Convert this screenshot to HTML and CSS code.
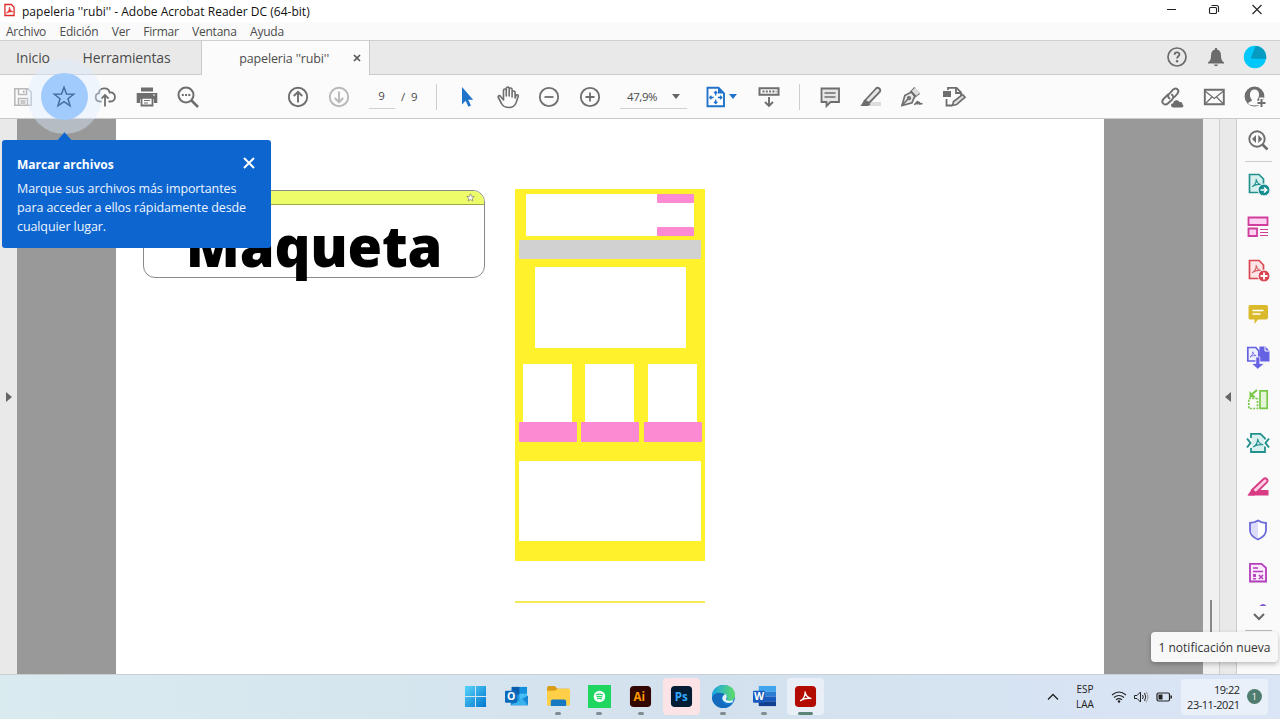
FILE: index.html
```html
<!DOCTYPE html>
<html lang="es">
<head>
<meta charset="utf-8">
<title>papeleria "rubi" - Adobe Acrobat Reader DC</title>
<link rel="stylesheet" href="styles.css">
</head>
<body>
<svg width="0" height="0" class="defs">
  <symbol id="trefoil" viewBox="0 0 24 24"><path d="M3 19.500C8 17.500 12 10 11.300 4C12.500 10 16 14 21.500 15.500C16 14.500 9 15.500 3 19.500Z" fill="none" stroke="currentColor" stroke-width="2.400" stroke-linejoin="round"/></symbol>
</svg>
<div class="app">
  <header class="titlebar">
    <svg class="app-icon" viewBox="0 0 12 14"><path d="M1 1h7l3 3v9H1z" fill="#fff" stroke="#d92b2b" stroke-width="1.400"/><path d="M2.500 10.500C5 9 6 6.500 5.800 4C6.500 7 8 8.500 10 9C7.500 8.500 5 9 2.500 10.500z" fill="#e33" stroke="#e33" stroke-width=".8"/></svg>
    <span class="title">papeleria ''rubi'' - Adobe Acrobat Reader DC (64-bit)</span>
    <svg class="window-controls" width="102" height="20" viewBox="0 0 102 20" fill="none" stroke="#222" stroke-width="1.100"><path d="M3 9.500h9M88.500 5l9 9M97.500 5l-9 9"/><rect x="45.500" y="7.500" width="7" height="6" rx="1"/><path d="M47.500 5.500h5a2 2 0 0 1 2 2v4.500"/></svg>
  </header>
  <nav class="menubar"><span>Archivo</span><span>Edición</span><span>Ver</span><span>Firmar</span><span>Ventana</span><span>Ayuda</span></nav>
  <div class="tabs">
    <span class="tab home">Inicio</span><span class="tab tools">Herramientas</span>
    <div class="tab-open"><span>papeleria ''rubi''</span><svg width="8" height="8" viewBox="0 0 8 8"><path d="M1 1l6 6M7 1L1 7" stroke="#555" stroke-width="1.700"/></svg></div>
    <div class="account">
      <svg width="24" height="24" viewBox="0 0 24 24"><circle cx="12" cy="12" r="9" fill="none" stroke="#6b6b6b" stroke-width="1.700"/><path d="M9.600 9.700c0-3.200 5-3 4.800-.2c-.1 1.700-2.300 1.900-2.300 4" fill="none" stroke="#666" stroke-width="1.800"/><circle cx="12.100" cy="16.300" r="1.200" fill="#666"/></svg>
      <svg width="24" height="24" viewBox="0 0 24 24" fill="#6b6b6b"><path d="M11 4.500V3h2v1.500c3 .7 4 3 4 6.500c0 3.500 1 5 3 6.500v1H4v-1c2-1.500 3-3 3-6.500c0-3.500 1-5.800 4-6.500z"/><path d="M10 19.500h4c-.3 2.200-3.700 2.200-4 0z"/></svg>
      <svg width="24" height="24" viewBox="0 0 24 24"><circle cx="12" cy="12" r="11.200" fill="#00c8fb"/><path d="M12.500 1a11.200 11.200 0 0 1 10.600 13L7.800 13.500z" fill="#069bc0"/></svg>
    </div>
  </div>
  <div class="toolbar">
    <div class="tool-group files">
      <svg viewBox="0 0 24 24" fill="none" stroke="#b9b9b9" stroke-width="1.600"><path d="M3.800 3.800h13l3.400 3.400v13H3.800zM7.500 4v5.500h8V4M7.500 20v-6.500h9V20M12.700 5.500v2.500M9.500 16h5M9.500 18h5"/></svg>
      <span class="star-tool"><svg viewBox="0 0 24 24"><path d="M12 2.300l2.500 6.800 7.200.2-5.700 4.400 2 7.100-6-4.100-6 4.100 2-7.100-5.700-4.400 7.200-.2z" fill="none" stroke="#436e9f" stroke-width="1.500"/></svg></span>
      <svg viewBox="0 0 24 24" fill="none" stroke="#6e6e6e" stroke-width="1.800"><path d="M8.500 16.500H6.800A4.200 4.200 0 0 1 6 8.200C6.200 2.100 15.500 1.800 16.700 7.500C23.300 6.500 23.800 16.500 17.500 16.500h-2M12 21.500V10.500M8.400 13.700L12 10l3.600 3.700"/></svg>
      <svg viewBox="0 0 24 24"><path d="M6 2.500h12v4H6z" fill="#6e6e6e"/><path d="M1.700 8h20.600v10H19v-4H5v4H1.700z" fill="#6e6e6e"/><path d="M6.500 12.800h11v7.700h-11z" fill="#fbfbfb" stroke="#6e6e6e" stroke-width="1.800"/><path d="M9 15.500h6M9 18h4" stroke="#6e6e6e" stroke-width="1.200"/><path d="M18 10h2" stroke="#fff"/></svg>
      <svg viewBox="0 0 24 24" fill="none" stroke="#6e6e6e"><circle cx="10" cy="10" r="7.500" stroke-width="2"/><path d="M15.500 15.500l6.500 6.500" stroke-width="2.500"/><path d="M5.800 10h8.500" stroke-width="2" stroke-dasharray="2 1.250"/></svg>
    </div>
    <div class="tool-group pages">
      <svg viewBox="0 0 24 24" fill="none" stroke="#6e6e6e" stroke-width="1.900"><circle cx="12" cy="12" r="9.200"/><path d="M12 17.500V7.500M7.800 11L12 6.800l4.200 4.200"/></svg>
      <svg viewBox="0 0 24 24" fill="none" stroke="#b8b8b8" stroke-width="1.900"><circle cx="12" cy="12" r="9.200"/><path d="M12 6.500v10M7.800 13l4.200 4.200 4.200-4.200"/></svg>
      <span class="page-input">9</span><span class="page-total">/&nbsp; 9</span>
    </div>
    <i class="divider"></i>
    <div class="tool-group view">
      <svg viewBox="0 0 24 24"><path d="M7 2v17.500l3.600-3.800 2.800 6 2.600-1.200-2.800-5.800h5z" fill="#2173ca"/></svg>
      <svg viewBox="0 0 24 24" fill="none" stroke="#6e6e6e" stroke-width="1.600" stroke-linecap="round" stroke-linejoin="round"><path d="M7.500 12V5.500c0-2 2.800-2 2.800 0V11V3.500c0-2 2.900-2 2.900 0V11V4.500c0-2 2.900-2 2.900 0V12V7.500c0-2 3-1.800 3 0V13l1-2.500c.8-1.500 2.800-.6 2 1.300L20 18c-1.500 3.500-3.500 4.500-7 4.500c-4 0-6-1-7.500-4L2.300 12.500c-.6-1.700 1.300-2.500 2.300-1L7.500 15z"/></svg>
      <svg viewBox="0 0 24 24" fill="none" stroke="#6e6e6e" stroke-width="1.800"><circle cx="12" cy="12" r="9.200"/><path d="M7.500 12h9"/></svg>
      <svg viewBox="0 0 24 24" fill="none" stroke="#6e6e6e" stroke-width="1.800"><circle cx="12" cy="12" r="9.200"/><path d="M7.500 12h9M12 7.500v9"/></svg>
      <span class="zoom-box">47,9%<b class="caret"></b></span>
      <svg viewBox="0 0 24 24"><path d="M3.500 2.800h11l5.500 5.500v12.900H3.500z" fill="#fff" stroke="#2173ca" stroke-width="1.900"/><path d="M14 2v6.500h6.500z" fill="#2173ca"/><path d="M11.700 6.500v4M11.700 14.500v4M5.700 12.500h4M13.800 12.500h4M10 8.200L11.700 6.500l1.700 1.700M10 16.800l1.700 1.700 1.700-1.700M7.400 10.800L5.700 12.500l1.700 1.700M16.100 10.800l1.700 1.700-1.700 1.700" fill="none" stroke="#2173ca" stroke-width="1.300"/></svg>
      <b class="caret blue"></b>
      <svg class="scroll-tool" viewBox="0 0 24 24" fill="none" stroke="#6e6e6e"><path d="M2.500 3.300h19v6.500h-19z" stroke-width="2"/><path d="M5.500 6.600h14" stroke-width="2" stroke-dasharray="2 1.300"/><path d="M12 12v8.500M8 17l4 4 4-4" stroke-width="1.900"/></svg>
    </div>
    <i class="divider"></i>
    <div class="tool-group markup">
      <svg viewBox="0 0 24 24" fill="#e6e6e6" stroke="#6e6e6e" stroke-width="1.800"><path d="M3.500 3.500h17.500v13.500h-8.500l-4 4v-4h-5z"/><path d="M6.500 8h11M6.500 12h11" stroke-width="1.400"/></svg>
      <svg viewBox="0 0 24 24"><path d="M9 17h13v4H5z" fill="#ddd"/><path d="M6 15.500L17 3.500c2-2 5.500.8 3.700 3.500L10 18z" fill="#e5e5e5" stroke="#6e6e6e" stroke-width="1.800"/><path d="M5.500 14.500l6 5-2.500 1.500H1.500z" fill="#6e6e6e"/></svg>
      <svg viewBox="0 0 24 24" fill="none" stroke="#6e6e6e" stroke-width="1.700"><path d="M11.500 7L4.800 10.500 2 20.500l10-2.800 2.800-6.500z" fill="#e9e9e9"/><path d="M2 20.500l6-6.500"/><circle cx="9" cy="13.200" r="1.300"/><path d="M11 6.800L14.800 2.500M14.800 11.500l4.700-3.300"/><path d="M11.500 6l4-3.500 4.500 5-4 3.500z" fill="#ddd" stroke="none"/><path d="M10.500 5.800l5.500 6" stroke-width="1.900"/><path d="M14.500 20c3.500-5 4-4 2.500-.5c1.500-3 2.800-3 2.200 0c1-1.500 2-.8 3.300-.5" stroke-width="1.600"/></svg>
      <svg viewBox="0 0 24 24" fill="none" stroke="#6e6e6e" stroke-width="1.800"><path d="M6 5V2.800h8.500l4.500 4.500V11M14 3v5h5M4.500 14v6.500H10"/><path d="M1 6h8v6H1z" fill="#6e6e6e" stroke="none"/><path d="M10.500 20.500l1-4 9-7 2.500 2.700-8.500 7.300z" fill="#ddd" stroke-width="1.600"/></svg>
    </div>
    <div class="tool-group share">
      <svg viewBox="0 0 24 24" fill="none" stroke="#6e6e6e" stroke-width="1.900" stroke-linecap="round"><path d="M9.500 13.500c-2-1.500-1.500-3.500-.3-4.700L13 4.700c3.200-3 7 .6 4.400 3.900L14.500 12M8 9.500L3.500 14c-3.200 3.500 1.300 7.200 4.300 4.500L12 14.700c1.500-1.500 1.700-3.500 0-5"/><path d="M13.500 22.500c-3.200 0-3.400-4-.3-4.200c0-3.800 5.300-4 6.200-1.300c2.700-.5 3.400 1.200 2.800 2.300c2 .7 1.300 3.200-.5 3.200z" fill="#6e6e6e" stroke="none"/></svg>
      <svg viewBox="0 0 24 24" fill="none" stroke="#6e6e6e"><path d="M2.800 4.800h19v14.500h-19z" stroke-width="1.900"/><path d="M3 6l9.300 7.500L21.500 6M3 19l7-7M21.500 19l-7-7" stroke-width="1.200"/></svg>
      <svg viewBox="0 0 24 24"><circle cx="11.500" cy="11.500" r="9.900" fill="#6e6e6e"/><path d="M5 18.300c1.200-1.600 4-1.800 4-3.300C5.500 11 6.500 4.500 11.500 4.500s6 6.500 2.500 10.500c0 1.200 2 1.500 3.500 2.500l-3 2.600C11 21 7 20.500 5 18.300z" fill="#fbfbfb"/><path d="M18.500 12.500v11M13 18h11" stroke="#fbfbfb" stroke-width="4.500"/><path d="M18.500 14v8M14.500 18h8" stroke="#6e6e6e" stroke-width="2"/></svg>
    </div>
  </div>
  <main class="workspace">
    <div class="left-rail"><svg width="6" height="10" viewBox="0 0 6 10"><path d="M0 0l6 5-6 5z" fill="#666"/></svg></div>
    <div class="canvas">
      <section class="page">
        <div class="heading-card"><div class="card-strip"><svg width="9" height="9" viewBox="0 0 24 24"><path d="M12 2l3 7 7 .5-5.500 4.700 2 7.300-6.500-4-6.500 4 2-7.300L2 9.500 9 9z" fill="#fff" stroke="#9b9b80" stroke-width="2.500"/></svg></div><h1>Maqueta</h1></div>
        <div class="mockups">
          <div class="mock">
            <div class="mock-header"><i></i><i></i></div>
            <div class="mock-nav"></div>
            <div class="mock-hero"></div>
            <div class="mock-cards"><div><i></i><b></b></div><div><i></i><b></b></div><div><i></i><b></b></div></div>
            <div class="mock-footer"></div>
          </div>
          <div class="mock-line"></div>
        </div>
      </section>
    </div>
    <div class="scrollbar"><i></i></div>
    <div class="right-rail"><svg width="6" height="10" viewBox="0 0 6 10"><path d="M6 0L0 5l6 5z" fill="#666"/></svg></div>
    <aside class="tools-panel">
      <div class="first"><svg viewBox="0 0 24 24" fill="none" stroke="#6e6e6e"><circle cx="11" cy="11" r="7.700" stroke-width="1.900"/><path d="M16.500 16.500l5 5" stroke-width="2.700"/><path d="M10 7v8l-4-4zM12.300 7v8l4-4z" fill="#6e6e6e" stroke="none"/></svg></div>
      <div><svg viewBox="0 0 24 24"><path d="M3.500 2.500h9.500l4.500 4.500v13.500h-14z" fill="#d6efef" stroke="#23928f" stroke-width="1.700"/><svg x="5" y="5" width="11" height="12" color="#23928f"><use href="#trefoil"/></svg><circle cx="18" cy="18" r="6" fill="#168e90" stroke="#fafafa"/><path d="M14.500 18h6M18 15.500l2.700 2.500-2.700 2.500" fill="none" stroke="#fff" stroke-width="1.600"/></svg></div>
      <div><svg viewBox="0 0 24 24" fill="#fbd2ef" stroke="#d13d9d" stroke-width="1.800"><path d="M2.500 2.500h19v7.500h-19zM2.500 13.500h8.500v7.500H2.500z"/><path d="M14 14.500h8M14 17.500h8M14 20.500h8" stroke-width="1.100"/></svg></div>
      <div><svg viewBox="0 0 24 24"><path d="M3.500 2.500h9.500l4.500 4.500v13.500h-14z" fill="#fde5e5" stroke="#da464f" stroke-width="1.700"/><svg x="5" y="5" width="11" height="12" color="#d66368"><use href="#trefoil"/></svg><circle cx="18" cy="18" r="6" fill="#d94650" stroke="#fafafa"/><path d="M14.500 18h7M18 14.500v7" stroke="#fff" stroke-width="1.800"/></svg></div>
      <div><svg viewBox="0 0 24 24"><path d="M4 3h16q2 0 2 2v10.500q0 2-2 2h-8L8.500 22v-4.500H4q-1.500 0-1.500-2V5Q2.500 3 4 3z" fill="#dab92b"/><path d="M6.500 8.500h11M6.500 12h8" stroke="#fff" stroke-width="1.600"/></svg></div>
      <div><svg viewBox="0 0 24 24"><path d="M1.800 2.500h8l3 3.500v10h-11z" fill="#eeefff" stroke="#6462e2" stroke-width="1.700"/><svg x="3" y="4.500" width="8" height="10" color="#6462e2"><use href="#trefoil"/></svg><path d="M13.500 1.500h6L23.500 6v10.500H13z" fill="#6462e2"/><path d="M19 1.500V6h4.500" fill="none" stroke="#fff"/><path d="M9.800 12h4v6.500h4.500L11.800 24.200 5.500 18.500h4.300z" fill="#6462e2" stroke="#fff" stroke-width=".7"/></svg></div>
      <div><svg viewBox="0 0 24 24" fill="none" stroke="#7ac648" stroke-width="1.700"><path d="M14 2.800h7.200v17.500H14z" fill="#e3f5d6"/><path d="M11.500 10.500h-8.700v10h8.700v-10" stroke-dasharray="2 1.300"/><path d="M11 2L5 7" stroke-width="2"/><path d="M3.500 3v6.500H10z" fill="#7ac648" stroke="none"/></svg></div>
      <div><svg viewBox="0 0 24 24" fill="none" stroke="#23918e" stroke-width="1.800"><path d="M5 7V2.800h9.500L19 7.300v13.700H5V17" fill="#d9f0ef"/><path d="M4 8.500h2v7H4zM18 8.500h2v7h-2z" fill="#fafafa" stroke="none"/><svg x="6" y="5.500" width="12" height="13" color="#23918e"><use href="#trefoil"/></svg><path d="M1 7.500L4.500 12 1 16.500M23 7.500L19.500 12l3.500 4.500" stroke-width="2"/></svg></div>
      <div><svg viewBox="0 0 24 24"><path d="M8 15h14.500v5.500H2z" fill="#d83a83"/><path d="M6 15L17.500 4c2-2 5.500.8 3.300 3.300L10 18z" fill="#ffcfe5" stroke="#d83a83" stroke-width="1.800"/><path d="M5.500 14.500l4.500 4-1.500 2H1.500z" fill="#d83a83"/></svg></div>
      <div><svg viewBox="0 0 24 24"><path d="M12 2.500c2.500 1.800 5 2.500 8 2.500v7c0 4-3.500 7.500-8 9.500c-4.500-2-8-5.500-8-9.500V5c3 0 5.500-.7 8-2.500z" fill="#fff" stroke="#6b6bd8" stroke-width="1.800"/><path d="M12 3.800v16.500C8 18.500 5 15.500 5 12V6c2.500 0 4.500-.6 7-2.200z" fill="#dedcfb"/></svg></div>
      <div><svg viewBox="0 0 24 24" fill="none" stroke="#b23dbb" stroke-width="1.800"><path d="M4 2.800h11.500l4.500 4V20.500H4z" fill="#fce9fc"/><path d="M7 7h5M7 10.500h10" stroke-width="1.400"/><path d="M8.500 13v3M8.500 17v1.500" stroke-width="2.800"/><path d="M13 14l4 4M17 14l-4 4" stroke-width="1.500"/></svg></div>
      <div class="more"><svg viewBox="0 0 28 30"><path d="M14.500 6q3.500-4 7 0z" fill="#8158d1"/><path d="M9 14l5 5 5-5" fill="none" stroke="#666" stroke-width="2"/></svg></div>
    </aside>
  </main>
  <footer class="taskbar">
    <div class="pinned">
      <span><svg viewBox="0 0 24 24"><defs><linearGradient id="win" x2="1" y2="1"><stop stop-color="#58d4fa"/><stop offset="1" stop-color="#0076ce"/></linearGradient></defs><path d="M1 1h10.500v10.500H1zM12.500 1H23v10.500H12.500zM1 12.500h10.500V23H1zM12.500 12.500H23V23H12.500z" fill="url(#win)"/></svg></span>
      <span><svg viewBox="0 0 24 24"><path d="M7 2h16v15H7z" fill="#1490df"/><path d="M7 2h8v8H7z" fill="#0b5cad"/><path d="M15 9h8v8h-8z" fill="#47bff4"/><path d="M6 11l9 5 9-5v10H6z" fill="#1688d6"/><path d="M6 21l12-7 6 7z" fill="#39b1ed"/><rect y="6" width="12.500" height="12.500" rx="1" fill="#0969bd"/><text x="2.100" y="16" class="glyph">O</text></svg></span>
      <span class="running"><svg viewBox="0 0 24 24"><path d="M0 3q0-2 2-2h6l3 3h11q2 0 2 2v15H0z" fill="#d99c16"/><path d="M0 6h8l3-2h13v17H0z" fill="#ffcf48"/><path d="M4 22v-5q0-2 2-2h12q2 0 2 2v5z" fill="#1678c2"/></svg></span>
      <span class="running"><svg viewBox="0 0 24 24"><path d="M0 0h24v24H0z" fill="#1fd760"/><circle cx="12" cy="12" r="6" fill="#fff"/><path d="M8.500 10q4-1 7 .5M9 12.200q3-.8 6 .4M9.500 14.300q3-.6 5 .3" fill="none" stroke="#1fd760" stroke-width="1.300"/></svg></span>
      <span class="running"><svg viewBox="0 0 24 24"><rect x="1" y="1" width="22" height="22" rx="4" fill="#320700"/><text x="4.700" y="16.500" class="adobe ai">Ai</text></svg></span>
      <span class="attention"><svg viewBox="0 0 24 24"><rect x="1" y="1" width="22" height="22" rx="4" fill="#001d35"/><text x="5" y="16.500" class="adobe ps">Ps</text></svg></span>
      <span class="running"><svg viewBox="0 0 24 24"><defs><linearGradient id="edge"><stop stop-color="#1aa5e8"/><stop offset="1" stop-color="#61dd68"/></linearGradient></defs><circle cx="12" cy="12" r="12" fill="#1179ce"/><path d="M0 11C1-3 24-4 24 11c0 5-5 7-9 5c3-3-1-8-6-7C4 8 1 10 0 13z" fill="url(#edge)"/><path d="M0 13C3 7 9 7 13 10c-7 3-3 13 7 10C13 28 0 23 0 13z" fill="#146bbd"/><path d="M14.500 9.500c-8 3-2 12 7 8.500l1-3c-4 3-10 1-7-2z" fill="#e4f5fa"/></svg></span>
      <span class="running"><svg viewBox="0 0 24 24"><path d="M6 1h18v6H6z" fill="#41a5ee"/><path d="M6 7h18v5H6z" fill="#2b7cd3"/><path d="M6 12h18v5H6z" fill="#185abd"/><path d="M6 17h18v5H6z" fill="#103f91"/><rect y="6" width="12.500" height="12.500" rx="1" fill="#185abd"/><text x="1" y="16" class="glyph">W</text></svg></span>
      <span class="active"><svg viewBox="0 0 24 24"><rect x="1" y="1" width="22" height="22" rx="4" fill="#b30b00"/><svg x="5" y="4.500" width="14" height="15" color="#fff"><use href="#trefoil"/></svg></svg></span>
    </div>
    <div class="tray">
      <svg class="chevron" width="12" height="8" viewBox="0 0 12 8"><path d="M1 6.500l5-5 5 5" fill="none" stroke="#222" stroke-width="1.300"/></svg>
      <span class="language">ESP<br>LAA</span>
      <svg class="status" width="62" height="18" viewBox="0 0 62 18" fill="none" stroke="#222"><path d="M1 7q7-6 14 0M3 9.500q5-4 10 0M5 11.900q3-2.500 6 0" stroke-width="1.100"/><circle cx="8" cy="13.500" r="1.200" fill="#222" stroke="none"/><path d="M23.500 7.500H26L29.500 4v10L26 10.500h-2.500zM31.500 7q1.500 2 0 4M33.500 5q2.500 4 0 8"/><path d="M35 3.500q4 5.500 0 11" stroke="#999"/><rect x="46" y="5" width="12.500" height="8" rx="1.500" stroke-width="1.200"/><path d="M47.500 6.500h4v5h-4z" fill="#222" stroke="none"/><path d="M60.200 7.500v3" stroke-width="1.500"/></svg>
      <div class="clock"><span>19:22<br>23-11-2021</span><b>1</b></div>
    </div>
  </footer>
</div>
<div class="coachmark"><svg class="tip" viewBox="0 0 14 8"><path d="M0 8l7-8 7 8z" fill="#0d66d0"/></svg><div class="coach-head"><strong>Marcar archivos</strong><svg width="12" height="12" viewBox="0 0 12 12"><path d="M1 1l10 10M11 1L1 11" stroke="#fff" stroke-width="2"/></svg></div><p>Marque sus archivos más importantes<br>para acceder a ellos rápidamente desde<br>cualquier lugar.</p></div>
<div class="notification">1 notificación nueva</div>
</body>
</html>
```
FILE: styles.css
```css
* { box-sizing: border-box; }
body { margin: 0; overflow: hidden; font-family: "Open Sans", "Noto Sans", sans-serif; color: #4b4b4b; }
svg { display: block; flex: none; }
.defs { position: absolute; }
.app { width: 1280px; height: 719px; display: flex; flex-direction: column; }
.titlebar { height: 22px; display: flex; align-items: center; padding-left: 4px; background: #fff; color: #111; font-size: 12px; white-space: nowrap; }
.title { letter-spacing: .02px; }
.app-icon { width: 11px; height: 14px; margin: 0 7px 2px 0; }
.window-controls { margin: 0 14.500px 2px auto; }
.menubar { height: 18px; display: flex; gap: 13.500px; padding-left: 6px; background: #fafafa; font-size: 12px; line-height: 19px; letter-spacing: -.25px; }
.tabs { height: 35px; display: flex; background: #e9e9e9; border-top: 1px solid #cfcfcf; border-bottom: 1px solid #cacaca; font-size: 14px; line-height: 33px; letter-spacing: -.15px; }
.home { width: 66px; padding-left: 16px; }
.tools { width: 135px; padding-left: 16.500px; }
.tab-open { display: flex; align-items: center; justify-content: flex-end; gap: 24px; width: 169px; height: 34px; padding-right: 8px; background: #fbfbfb; border: solid #cacaca; border-width: 0 1px; font-size: 12.500px; }
.account { display: flex; align-items: center; gap: 15px; margin: 0 13.500px 0 auto; }
.account svg { margin-top: -1px; }
.toolbar { height: 44px; flex: none; display: flex; align-items: center; background: #fbfbfb; border-bottom: 1px solid #c9c9c9; font-size: 11.500px; }
.tool-group { display: flex; align-items: center; height: 43px; }
.tool-group > svg { width: 24px; height: 24px; }
.files { width: 286px; padding-left: 11px; gap: 17.200px; }
.star-tool { position: relative; z-index: 1; width: 24px; height: 24px; }
.star-tool::before { content: ""; position: absolute; z-index: -1; inset: -11.500px; border-radius: 50%; background: #a2cbfd; box-shadow: 0 0 0 14px rgba(219,235,255,.42); }
.pages { width: 150px; gap: 17.300px; }
.page-input { width: 26px; height: 25px; text-align: center; line-height: 24px; border-bottom: 1px solid #d1d1d1; }
.page-total { margin-left: -11px; white-space: nowrap; }
.divider { width: 1px; height: 26px; background: #cecece; }
.view { width: 362px; padding-left: 18px; gap: 17px; }
.zoom-box { display: flex; align-items: center; justify-content: space-between; width: 67px; height: 25px; margin-left: 1px; padding: 0 7px; border-bottom: 1px solid #d1d1d1; font-size: 11.500px; letter-spacing: -.4px; }
.caret { border: 4px solid transparent; border-top: 5px solid #666; border-bottom: 0; }
.caret.blue { margin-left: -16px; border-top-color: #2173ca; }
.scroll-tool { margin-left: 3px; }
.markup { padding-left: 18px; gap: 17.200px; }
.share { margin: 0 13px 0 auto; gap: 17.500px; }
.workspace { height: 555px; flex: none; display: flex; }
.left-rail { width: 17px; background: #e9e9e9; display: flex; align-items: center; padding-left: 5.500px; }
.canvas { width: 1186px; padding: 0 99px; background: #999; }
.page { display: flex; width: 988px; height: 555px; padding: 70px 0 0 27px; background: #fff; }
.heading-card { width: 342px; height: 88px; margin-top: 1px; border: 1px solid #8a8a8a; border-radius: 12px; text-align: center; }
.card-strip { display: flex; justify-content: flex-end; height: 14px; padding: 2px 9px 0; background: #edfc69; border-bottom: 1px solid #9ea448; border-radius: 11px 11px 0 0; }
h1 { margin: 5.500px 0 0; color: #000; font-size: 56px; line-height: 68px; font-weight: 800; letter-spacing: -.2px; }
.mockups { margin-left: 30px; width: 190px; }
.mock { height: 372px; padding: 5px 4px 0; background: #fff22d; }
.mock-header { height: 41.500px; width: 168px; margin-left: 6.500px; background: #fff; display: flex; flex-direction: column; justify-content: space-between; align-items: flex-end; border-radius: 1px; }
.mock-header i { width: 37px; height: 9px; background: #fb8ad3; border-radius: 1px; }
.mock-nav { height: 19.500px; margin-top: 4.200px; background: #d1d1d1; border-radius: 1px; }
.mock-hero { height: 80.500px; width: 151px; margin: 8.300px 0 0 15.500px; background: #fff; border-radius: 1px; }
.mock-cards { display: flex; height: 77.500px; margin-top: 16.500px; }
.mock-cards > div { width: 58px; flex: none; margin-right: 4px; }
.mock-cards > div:nth-child(2) { margin-right: 5px; }
.mock-cards i { display: block; width: 49px; height: 58px; margin-left: 3.500px; background: #fff; }
.mock-cards > div:nth-child(3) i { margin-left: 4px; }
.mock-cards b { display: block; height: 19.500px; background: #fb8ad3; border-radius: 1px; }
.mock-footer { height: 80.500px; margin-top: 19px; background: #fff; border-radius: 1px; }
.mock-line { height: 2px; margin-top: 40px; background: #f5ea54; }
.scrollbar { width: 16px; padding: 481px 0 0 7px; background: #f0f0f0; }
.scrollbar i { display: block; width: 2px; height: 40px; background: #888; }
.right-rail { width: 18px; background: #e9e9e9; border: solid #ccc; border-width: 0 1px; display: flex; align-items: center; padding-left: 4.500px; }
.tools-panel { width: 43px; padding-right: 1px; background: #fafafa; display: grid; grid-template-rows: repeat(12, 43.250px); justify-content: center; overflow: hidden; }
.tools-panel > div { width: 27px; display: grid; place-items: center; }
.tools-panel .first { border-bottom: 1px solid #ccc; }
.tools-panel > div > svg { width: 24px; height: 24px; }
.tools-panel .more { height: 36px; border-bottom: 1px solid #bbb; align-items: end; }
.tools-panel .more > svg { width: 28px; height: 30px; }
.taskbar { height: 45px; flex: none; display: flex; align-items: center; padding-left: 455px; background: linear-gradient(90deg, #d9ebef, #d3e1ee 55%, #dae5f5); border-top: 1px solid #c8d0d6; }
.pinned { display: grid; grid-template-columns: repeat(9, 41.250px); justify-items: center; margin-top: -1px; }
.pinned > span { position: relative; width: 37px; height: 37px; display: grid; place-items: center; border-radius: 4px; }
.pinned > span > svg { width: 23px; height: 23px; }
.running::after, .active::after { content: ""; position: absolute; bottom: 0; width: 6px; height: 3px; background: #828b91; border-radius: 2px; }
.attention { background: #fbe3e6; }
.active { background: #e9eff6; }
.active::after { width: 15px; background: #5b8578; }
.glyph { font: bold 11px "Open Sans", sans-serif; fill: #fff; }
.adobe { font: bold 12px "Open Sans", sans-serif; }
.ai { fill: #ff9a00; }
.ps { fill: #31a8ff; }
.tray { margin: -1px 12px 0 auto; display: flex; align-items: center; color: #222; font-size: 11px; line-height: 15px; }
.language { width: 40px; margin-left: 6px; text-align: center; font-size: 10px; }
.status { margin: 0 8px 0 6px; }
.clock { width: 87px; height: 36px; display: flex; align-items: center; justify-content: flex-end; gap: 7px; padding-right: 6.500px; border-radius: 4px; background: #eaf0fa; text-align: right; white-space: nowrap; letter-spacing: -.5px; }
.clock b { width: 15px; height: 15px; border-radius: 50%; background: #517d70; color: #fff; text-align: center; font-size: 9px; font-weight: 400; }
.coachmark { position: absolute; z-index: 3; left: 2px; top: 140px; width: 269px; height: 108px; padding: 16px 16.500px 0 15px; border-radius: 3px; background: #0d66d0; color: #eef5ff; font-size: 12.500px; }
.tip { position: absolute; left: 55px; top: -8px; width: 15px; height: 9px; }
.coach-head { display: flex; justify-content: space-between; line-height: 18px; color: #fff; font-size: 12px; }
.coach-head svg { margin-top: 1px; }
.coachmark p { margin: 5px 0 0; line-height: 19px; white-space: nowrap; letter-spacing: -.1px; }
.notification { position: absolute; z-index: 3; left: 1151px; top: 632px; width: 127px; height: 30px; border-radius: 4px; background: #f8f8f8; box-shadow: 0 2px 5px rgba(0,0,0,.25); color: #333; font-size: 12px; line-height: 31px; text-align: center; white-space: nowrap; }
```
